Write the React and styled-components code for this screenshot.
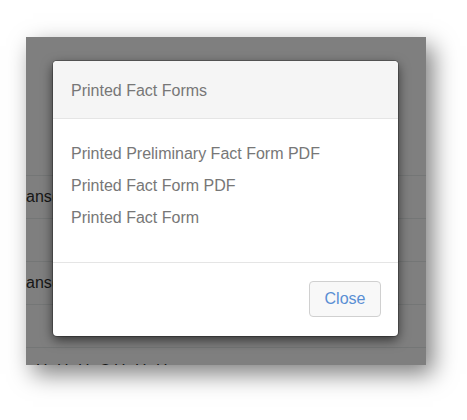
import React from "react";
import styled, { createGlobalStyle } from "styled-components";

const Global = createGlobalStyle`
  html, body { margin: 0; padding: 0; background: #ffffff; }
  body { font-family: "Liberation Sans", Arial, sans-serif; }
`;

const Page = styled.div`
  width: 467px;
  height: 420px;
  padding: 37px 0 0 26px;
  box-sizing: border-box;
  background: #ffffff;
  overflow: hidden;
`;

const Screen = styled.div`
  position: relative;
  width: 400px;
  height: 328px;
  background: #7f7f7f;
  overflow: hidden;
  box-shadow: 7px 9px 22px rgba(0, 0, 0, 0.5);
`;

const BackList = styled.div`
  padding-top: 138px;
  display: flex;
  flex-direction: column;
`;

const BackRow = styled.div`
  height: 43px;
  box-sizing: border-box;
  border-top: 1px solid #747676;
  display: flex;
  align-items: ${(p) => (p.$top ? "flex-start" : "center")};
  padding: ${(p) => (p.$top ? "14px 0 0 10px" : "0")};
  font-size: 16px;
  letter-spacing: ${(p) => (p.$top ? "2.5px" : "0")};
  color: #161616;
  white-space: pre;
`;

const Modal = styled.div`
  position: absolute;
  left: 27px;
  top: 24px;
  width: 345px;
  height: 275px;
  background: #ffffff;
  border-radius: 4px;
  box-shadow: 0 4px 12px rgba(0, 0, 0, 0.6), 0 0 0 1px rgba(0, 0, 0, 0.25);
  display: flex;
  flex-direction: column;
  overflow: hidden;
`;

const Header = styled.div`
  height: 58px;
  box-sizing: border-box;
  background: #f5f5f5;
  border-bottom: 1px solid #e5e5e5;
  display: flex;
  align-items: center;
  padding: 2px 0 0 18px;
  font-size: 16px;
  color: #777777;
`;

const Body = styled.div`
  height: 143px;
  box-sizing: border-box;
  padding: 19px 18px 0;
  display: flex;
  flex-direction: column;
`;

const Item = styled.div`
  height: 32px;
  display: flex;
  align-items: center;
  font-size: 16px;
  color: #777777;
`;

const Footer = styled.div`
  flex: 1;
  border-top: 1px solid #e5e5e5;
  display: flex;
  justify-content: flex-end;
  align-items: flex-start;
  padding: 18px 17px 0 0;
`;

const Button = styled.button`
  width: 72px;
  height: 36px;
  box-sizing: border-box;
  background: #f8f8f8;
  border: 1px solid #d0d0d0;
  border-radius: 4px;
  font-family: "Liberation Sans", Arial, sans-serif;
  font-size: 16px;
  color: #5a8fd4;
  padding: 0;
  cursor: pointer;
`;

export default function App() {
  return (
    <>
      <Global />
      <Page>
        <Screen>
          <BackList>
            <BackRow>ans(</BackRow>
            <BackRow />
            <BackRow>ans(</BackRow>
            <BackRow />
            <BackRow $top>H H H OH H H</BackRow>
          </BackList>
          <Modal>
            <Header>Printed Fact Forms</Header>
            <Body>
              <Item>Printed Preliminary Fact Form PDF</Item>
              <Item>Printed Fact Form PDF</Item>
              <Item>Printed Fact Form</Item>
            </Body>
            <Footer>
              <Button>Close</Button>
            </Footer>
          </Modal>
        </Screen>
      </Page>
    </>
  );
}
